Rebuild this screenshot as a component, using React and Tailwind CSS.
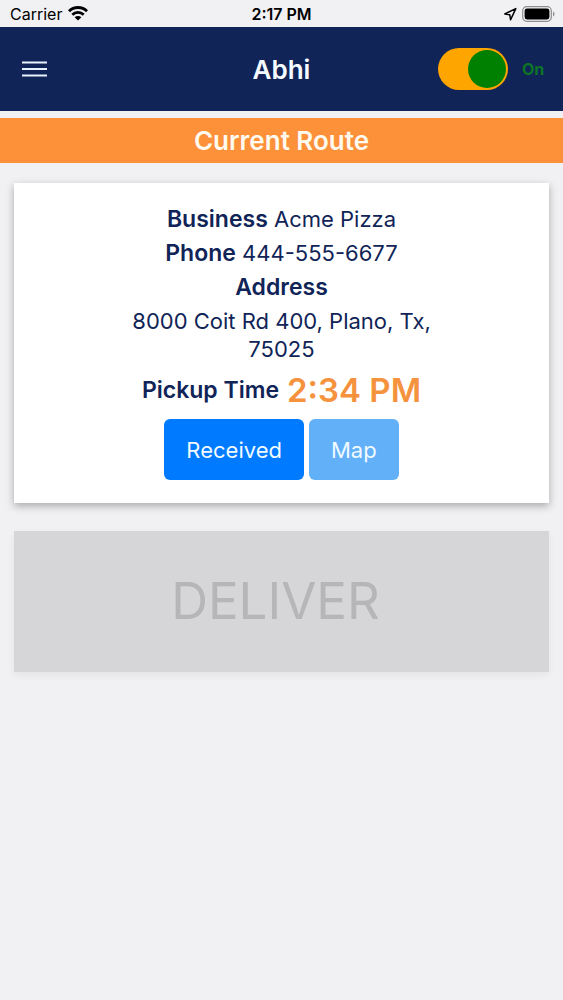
import { useState } from "react";

function WifiIcon() {
  return (
    <svg viewBox="0 0 20 15" className="h-[15px] w-5" aria-hidden="true">
      <g fill="none" stroke="#000" strokeWidth="2.8">
        <path d="M1 5.2a12.8 12.8 0 0 1 18 0" />
        <path d="M4.3 8.7a8.2 8.2 0 0 1 11.4 0" />
      </g>
      <path d="M10 14.6 6.6 11.3a4.9 4.9 0 0 1 6.8 0z" fill="#000" />
    </svg>
  );
}

function LocationIcon() {
  return (
    <svg viewBox="0 0 14 14" className="h-3.5 w-3.5" aria-hidden="true">
      <path
        d="M12.8 1.6 1.8 7l5 .8.8 5z"
        fill="none"
        stroke="#000"
        strokeWidth="1.5"
        strokeLinejoin="round"
      />
    </svg>
  );
}

function BatteryIcon() {
  return (
    <svg viewBox="0 0 34 16" className="h-4 w-[34px]" aria-hidden="true">
      <rect x="1.7" y="0.7" width="28.6" height="14.6" rx="4" fill="none" stroke="#8e8e90" strokeWidth="1.2" />
      <rect x="3.6" y="2.6" width="24.8" height="10.8" rx="2.4" fill="#000" />
      <path d="M32 5.6c2 .8 2 4 0 4.8z" fill="#8e8e90" />
    </svg>
  );
}

function StatusBar() {
  return (
    <div className="grid h-[27px] grid-cols-3 items-center px-2 text-base text-black">
      <div className="flex items-center gap-1.5 pl-0.5">
        <span>Carrier</span>
        <WifiIcon />
      </div>
      <span className="text-center font-semibold">2:17 PM</span>
      <div className="flex items-center justify-end gap-1">
        <LocationIcon />
        <BatteryIcon />
      </div>
    </div>
  );
}

function Header({ on, onToggle }) {
  return (
    <header className="grid h-[84px] grid-cols-3 items-center bg-[#102457] px-[18px]">
      <button type="button" aria-label="Menu" className="w-fit pl-1">
        <svg viewBox="0 0 25 16" className="h-4 w-[25px]" aria-hidden="true">
          <path d="M0 1.5h25M0 8h25M0 14.5h25" stroke="#e9f2ff" strokeWidth="1.8" />
        </svg>
      </button>
      <h1 className="text-center text-[26px] font-semibold text-[#f4faff]">Abhi</h1>
      <label className="flex items-center justify-end gap-3.5">
        <span className="relative flex h-[42px] w-[70px] items-center rounded-full bg-[#ffa500]">
          <input
            type="checkbox"
            role="switch"
            checked={on}
            onChange={onToggle}
            className="peer absolute inset-0 cursor-pointer appearance-none rounded-full"
          />
          <span className="pointer-events-none ml-0.5 h-[38px] w-[38px] rounded-full bg-[#008000] peer-checked:ml-[30px]" />
        </span>
        <span className="min-w-[23px] text-base font-bold text-[#0b7526]">{on ? "On" : "Off"}</span>
      </label>
    </header>
  );
}

function Field({ label, children }) {
  return (
    <p>
      <strong className="text-[23px] font-semibold">{label}</strong> {children}
    </p>
  );
}

export default function App() {
  const [on, setOn] = useState(true);
  return (
    <div className="min-h-screen bg-[#f1f0f3] font-['Inter','Liberation_Sans',sans-serif]">
      <StatusBar />
      <Header on={on} onToggle={() => setOn(!on)} />
      <h2 className="mt-[7px] bg-[#fc913a] text-center text-[26px] leading-[45px] font-semibold text-[#fffaf0]">
        Current Route
      </h2>
      <main className="flex flex-col gap-7 px-3.5 pt-5">
        <section className="flex flex-col items-center gap-1.5 bg-white px-4 pt-[22px] pb-[23px] text-center text-[22px] leading-7 text-[#102457] shadow-[0_3px_8px_rgba(0,0,0,0.3)]">
          <Field label="Business">Acme Pizza</Field>
          <Field label="Phone">444-555-6677</Field>
          <Field label="Address" />
          <p className="max-w-[340px]">8000 Coit Rd 400, Plano, Tx, 75025</p>
          <p className="flex h-[42px] items-center gap-2">
            <strong className="text-[23px] font-semibold">Pickup Time</strong>
            <span className="text-[33px] font-semibold text-[#f5923e]">2:34 PM</span>
          </p>
          <div className="flex gap-[5px] pt-0.5 text-[#f0faff]">
            <button type="button" className="h-[61px] rounded-md bg-[#007bff] px-[22px]">
              Received
            </button>
            <button type="button" className="h-[61px] rounded-md bg-[#62b0f8] px-[22px]">
              Map
            </button>
          </div>
        </section>
        <button
          type="button"
          disabled
          className="h-[141px] w-full bg-[#d6d5d8] pr-3 text-[51px] text-[#b6b5b8] shadow-[0_3px_8px_rgba(0,0,0,0.06)]"
        >
          DELIVER
        </button>
      </main>
    </div>
  );
}
